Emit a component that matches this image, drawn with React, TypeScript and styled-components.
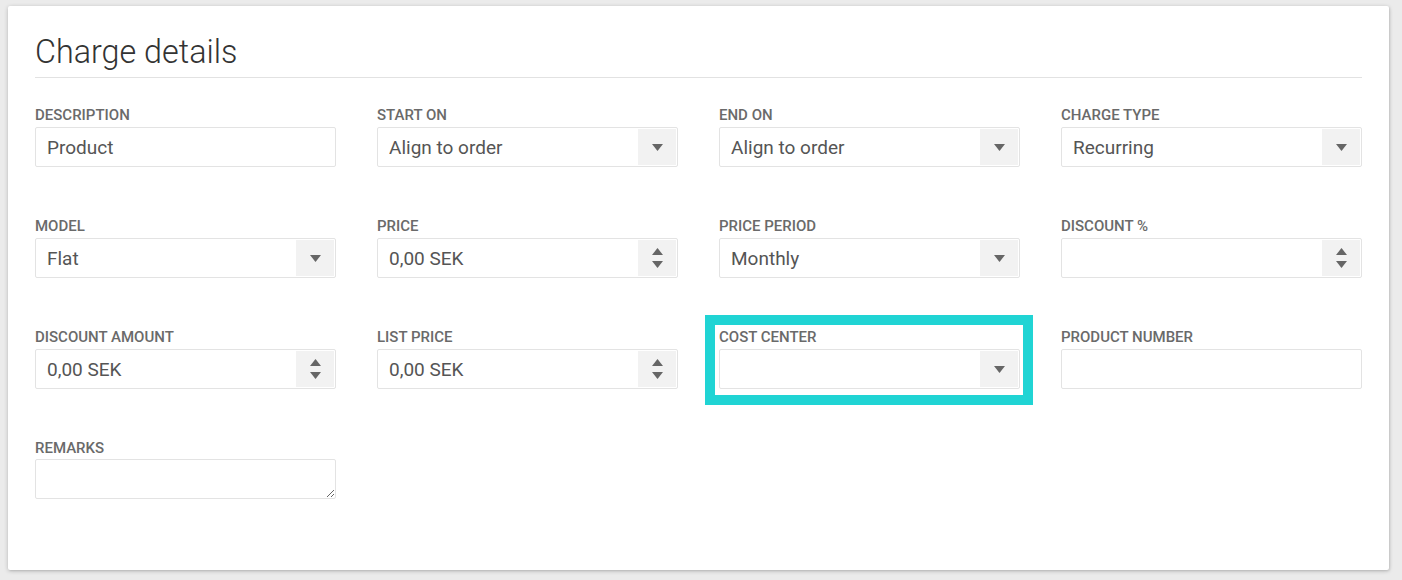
import React, { FunctionComponent } from 'react';
import styled, { createGlobalStyle } from 'styled-components';

const GlobalStyle = createGlobalStyle`
  html, body {
    margin: 0;
    padding: 0;
    background: #ebebeb;
    font-family: Roboto, 'Liberation Sans', Arial, sans-serif;
  }
`;

const Page = styled.div`
  padding: 6px 13px 10px 8px;
`;

const Card = styled.section`
  background: #fff;
  border-radius: 2px;
  box-shadow: 0 1px 4px rgba(0, 0, 0, 0.22), 1px 1px 2px rgba(0, 0, 0, 0.08);
  padding: 28px 27px 71px 27px;
  height: 564px;
  box-sizing: border-box;
`;

const Title = styled.h2`
  margin: 0 0 29px;
  padding-bottom: 7px;
  border-bottom: 1px solid #e2e2e2;
  font-size: 32.3px;
  line-height: 36px;
  font-weight: 300;
  color: #333;
`;

const Grid = styled.div`
  display: grid;
  grid-template-columns: repeat(4, 301px);
  column-gap: 41px;
  row-gap: 51px;
`;

const FieldWrap = styled.div<{ $highlight?: boolean }>`
  position: relative;
  display: flex;
  flex-direction: column;
  ${(p) =>
    p.$highlight &&
    `
    &::after {
      content: '';
      position: absolute;
      top: -14px;
      bottom: -16px;
      left: -14px;
      right: -13px;
      border: 10px solid #20d4d4;
      pointer-events: none;
    }
  `}
`;

const Label = styled.label`
  font-size: 15px;
  line-height: 17px;
  font-weight: 500;
  color: #6a6a6a;
  text-transform: uppercase;
  margin-bottom: 3px;
`;

const Control = styled.div`
  display: flex;
  height: 40px;
  box-sizing: border-box;
  border: 1px solid #e3e3e3;
  border-radius: 2px;
  background: #fff;
  overflow: hidden;
`;

const Input = styled.input`
  flex: 1;
  min-width: 0;
  border: none;
  outline: none;
  background: transparent;
  padding: 0 11px;
  font-family: inherit;
  font-size: 19px;
  color: #555;
`;

const Addon = styled.div`
  width: 38px;
  margin: 1px 1px 1px 0;
  background: #f2f2f2;
  display: flex;
  flex-direction: column;
  align-items: center;
  justify-content: center;
  gap: 6px;
`;

const TextArea = styled.textarea`
  height: 40px;
  margin-top: -1px;
  box-sizing: border-box;
  border: 1px solid #e3e3e3;
  border-radius: 2px;
  resize: vertical;
  outline: none;
  padding: 8px 11px;
  font-family: inherit;
  font-size: 19px;
  color: #555;
`;

const Caret = ({ up }: { up?: boolean }) => (
  <svg width="11" height="7" viewBox="0 0 11 7">
    <path d={up ? 'M0 7 L5.5 0 L11 7 Z' : 'M0 0 L11 0 L5.5 7 Z'} fill="#666" />
  </svg>
);

type Kind = 'text' | 'select' | 'number' | 'textarea';

interface FieldProps {
  label: string;
  kind: Kind;
  value?: string;
  highlight?: boolean;
}

const Field: FunctionComponent<FieldProps> = ({ label, kind, value = '', highlight }) => (
  <FieldWrap $highlight={highlight}>
    <Label>{label}</Label>
    {kind === 'textarea' ? (
      <TextArea readOnly value={value} />
    ) : (
      <Control>
        <Input readOnly value={value} />
        {kind === 'select' && (
          <Addon>
            <Caret />
          </Addon>
        )}
        {kind === 'number' && (
          <Addon>
            <Caret up />
            <Caret />
          </Addon>
        )}
      </Control>
    )}
  </FieldWrap>
);

const fields: FieldProps[] = [
  { label: 'Description', kind: 'text', value: 'Product' },
  { label: 'Start on', kind: 'select', value: 'Align to order' },
  { label: 'End on', kind: 'select', value: 'Align to order' },
  { label: 'Charge type', kind: 'select', value: 'Recurring' },
  { label: 'Model', kind: 'select', value: 'Flat' },
  { label: 'Price', kind: 'number', value: '0,00 SEK' },
  { label: 'Price period', kind: 'select', value: 'Monthly' },
  { label: 'Discount %', kind: 'number' },
  { label: 'Discount amount', kind: 'number', value: '0,00 SEK' },
  { label: 'List price', kind: 'number', value: '0,00 SEK' },
  { label: 'Cost center', kind: 'select', highlight: true },
  { label: 'Product number', kind: 'text' },
  { label: 'Remarks', kind: 'textarea' },
];

export default function App() {
  return (
    <Page>
      <GlobalStyle />
      <Card>
        <Title>Charge details</Title>
        <Grid>
          {fields.map((f) => (
            <Field key={f.label} {...f} />
          ))}
        </Grid>
      </Card>
    </Page>
  );
}
